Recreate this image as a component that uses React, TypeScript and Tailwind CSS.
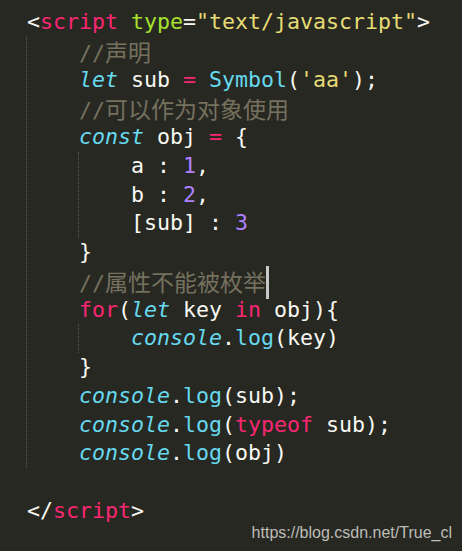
import React from 'react';

const mono = "font-['DejaVu_Sans_Mono',monospace]";

function Line({ children }: { children?: React.ReactNode }) {
  return <div className="h-[28.75px] leading-[28.75px] whitespace-pre">{children}</div>;
}

const Pink = ({ children }: { children: React.ReactNode }) => <span className="text-[#f92672]">{children}</span>;
const Cyan = ({ children }: { children: React.ReactNode }) => <span className="text-[#66d9ef]">{children}</span>;
const Ital = ({ children }: { children: React.ReactNode }) => <span className="text-[#66d9ef] italic">{children}</span>;
const Num = ({ children }: { children: React.ReactNode }) => <span className="text-[#ae81ff]">{children}</span>;

function Comment({ text }: { text: string }) {
  return (
    <span className="text-[#75715e]">
      //<span className="font-['Noto_Sans_CJK_SC',sans-serif] text-[23px]">{text}</span>
    </span>
  );
}

export default function App() {
  return (
    <div className={`w-[462px] h-[551px] overflow-hidden bg-[#272822] text-[#f8f8f2] ${mono} text-[21.6px] pt-[8px] pl-[27px]`}>
      <Line>
        {'<'}<Pink>script</Pink> <span className="text-[#a6e22e]">type</span>=<span className="text-[#e6db74]">"text/javascript"</span>{'>'}
      </Line>
      <div className="-ml-[1px] border-l border-dotted border-[#5c5c52] pl-[52px]">
        <Line><Comment text="声明" /></Line>
        <Line><Ital>let</Ital> sub <Pink>=</Pink> <Cyan>Symbol</Cyan>(<span className="text-[#e6db74]">'aa'</span>);</Line>
        <Line><Comment text="可以作为对象使用" /></Line>
        <Line><Ital>const</Ital> obj <Pink>=</Pink> {'{'}</Line>
        <div className="-ml-[1px] border-l border-dotted border-[#5c5c52] pl-[52px]">
          <Line>a : <Num>1</Num>,</Line>
          <Line>b : <Num>2</Num>,</Line>
          <Line>[sub] : <Num>3</Num></Line>
        </div>
        <Line>{'}'}</Line>
        <Line>
          <Comment text="属性不能被枚举" />
          <span className="inline-block w-[3px] h-[33px] bg-[#c8c8c8] align-middle -translate-y-[2px]" />
        </Line>
        <Line><Pink>for</Pink>(<Ital>let</Ital> key <Pink>in</Pink> obj){'{'}</Line>
        <div className="-ml-[1px] border-l border-dotted border-[#5c5c52] pl-[52px]">
          <Line><Ital>console</Ital>.<Cyan>log</Cyan>(key)</Line>
        </div>
        <Line>{'}'}</Line>
        <Line><Ital>console</Ital>.<Cyan>log</Cyan>(sub);</Line>
        <Line><Ital>console</Ital>.<Cyan>log</Cyan>(<Pink>typeof</Pink> sub);</Line>
        <Line><Ital>console</Ital>.<Cyan>log</Cyan>(obj)</Line>
      </div>
      <Line />
      <Line>
        {'</'}<Pink>script</Pink>{'>'}
      </Line>
      <div className="-mt-[2px] pr-[10px] text-right font-['Liberation_Sans',sans-serif] text-[16px] leading-[18px] text-[#bdbdb8]">
        https://blog.csdn.net/True_cl
      </div>
    </div>
  );
}
